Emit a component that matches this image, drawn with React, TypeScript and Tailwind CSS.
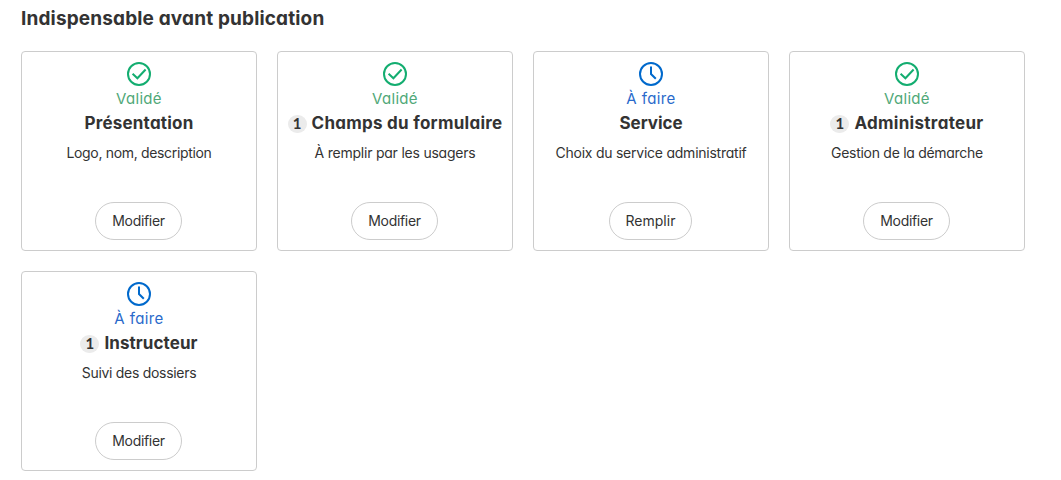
type Step = {
  done: boolean;
  count?: number;
  title: string;
  titleClass: string;
  description: string;
  descriptionClass: string;
  action: string;
};

const steps: Step[] = [
  { done: true, title: 'Présentation', titleClass: 'tracking-[0.22px]', description: 'Logo, nom, description', descriptionClass: 'tracking-[-0.33px]', action: 'Modifier' },
  { done: true, count: 1, title: 'Champs du formulaire', titleClass: 'tracking-[0.27px]', description: 'À remplir par les usagers', descriptionClass: 'tracking-[-0.22px]', action: 'Modifier' },
  { done: false, title: 'Service', titleClass: 'tracking-[-0.05px]', description: 'Choix du service administratif', descriptionClass: 'tracking-[-0.24px]', action: 'Remplir' },
  { done: true, count: 1, title: 'Administrateur', titleClass: 'tracking-[0.3px]', description: 'Gestion de la démarche', descriptionClass: 'tracking-[-0.29px]', action: 'Modifier' },
  { done: false, count: 1, title: 'Instructeur', titleClass: 'tracking-[0.08px]', description: 'Suivi des dossiers', descriptionClass: 'tracking-[-0.3px]', action: 'Modifier' },
];

function StatusIcon({ done }: { done: boolean }) {
  return (
    <svg viewBox="0 0 24 24" fill="none" strokeWidth="2" className={done ? 'size-6 stroke-[#13ad70]' : 'size-6 stroke-[#0069cc]'}>
      <circle cx="12" cy="12" r="11" />
      {done ? <path d="M5.6 11.8 10.4 16.3 18.6 7.5" /> : <path d="M12 4.5V12l4.8 4.8" />}
    </svg>
  );
}

function StepCard({ step }: { step: Step }) {
  return (
    <article className="flex h-[200px] w-[236px] flex-col items-center rounded-[4px] border border-[#cccccc] pt-[10px] pb-[10px]">
      <StatusIcon done={step.done} />
      <p className={step.done ? 'h-6 text-[15px] leading-[26px] tracking-[0.3px] text-[#4fa878]' : 'h-6 text-[15px] leading-[26px] tracking-[0.4px] text-[#2a6acb]'}>
        {step.done ? 'Validé' : 'À faire'}
      </p>
      <div className="flex h-[26px] items-center whitespace-nowrap">
        {step.count !== undefined && (
          <span className="mt-[2px] mr-[5px] flex h-[18px] w-[19px] items-center justify-center rounded-full bg-[#ebebeb] pb-[2px] font-['Lato',sans-serif] text-[15px] leading-4 font-bold">{step.count}</span>
        )}
        <h3 className={`text-[17px] leading-6 font-bold ${step.titleClass}`}>{step.title}</h3>
      </div>
      <p className={`mt-[7px] text-[14px] leading-5 whitespace-nowrap ${step.descriptionClass}`}>{step.description}</p>
      <button className={`mt-auto mr-px h-[38px] rounded-full border border-[#cccccc] pb-0.5 text-[14px] ${step.action === 'Modifier' ? 'w-[87px] tracking-[-0.3px]' : 'w-[83px]'}`}>
        {step.action}
      </button>
    </article>
  );
}

export default function App() {
  return (
    <main className="h-[480px] bg-white pl-[21px] font-['Inter',sans-serif] text-[#333333] [font-feature-settings:'cv11']">
      <h2 className="h-[51px] pt-[5px] text-[19px] leading-7 font-bold tracking-[0.15px]">Indispensable avant publication</h2>
      <section className="flex w-[1040px] flex-wrap gap-5">
        {steps.map((step) => <StepCard key={step.title} step={step} />)}
      </section>
    </main>
  );
}
